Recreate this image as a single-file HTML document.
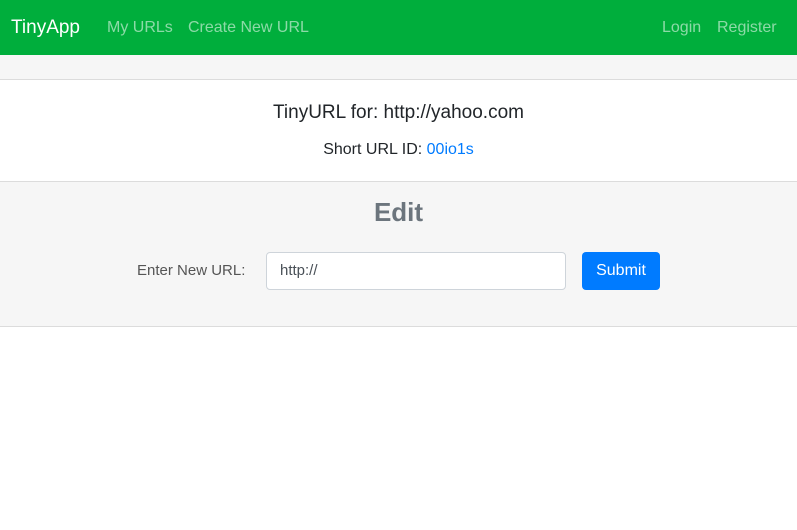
<!DOCTYPE html>
<html><head><meta charset="utf-8"><style>
*{box-sizing:border-box;margin:0;padding:0}
body{width:797px;height:530px;background:#fff;font-family:"Liberation Sans",sans-serif;position:relative;overflow:hidden}
.nav{position:absolute;left:0;top:0;width:797px;height:55px;background:#00ae3c}
.nav span{position:absolute;top:19px;font-size:16px;color:rgba(255,255,255,.55)}
.brand{font-size:19px!important;color:#fff!important;top:17px!important;left:11px}
.band1{position:absolute;top:55px;left:0;width:797px;height:25px;background:#f6f6f6;border-bottom:1px solid #dcdcdc}
.band2{position:absolute;top:181px;left:0;width:797px;height:146px;background:#f6f6f6;border-top:1px solid #dcdcdc;border-bottom:1px solid #dcdcdc}
.c{position:absolute;left:0;width:797px;text-align:center}
</style></head><body>
<div class="nav">
<span class="brand">TinyApp</span>
<span style="left:107px">My URLs</span>
<span style="left:188px">Create New URL</span>
<span style="left:662px">Login</span>
<span style="left:717px">Register</span>
</div>
<div class="band1"></div>
<div class="c" style="top:102px;font-size:19px;color:#212529">TinyURL for: http://yahoo.com</div>
<div class="c" style="top:141px;font-size:16px;color:#212529">Short URL ID: <span style="color:#007bff">00io1s</span></div>
<div class="band2">
<div class="c" style="top:15px;font-size:26px;color:#6c757d;font-weight:bold">Edit</div>
<div style="position:absolute;left:137px;top:80px;font-size:15px;color:#555">Enter New URL:</div>
<div style="position:absolute;left:266px;top:70px;width:300px;height:38px;background:#fff;border:1px solid #ced4da;border-radius:4px;padding:9px 13px;font-size:15px;color:#495057">http://</div>
<div style="position:absolute;left:582px;top:70px;width:78px;height:38px;background:#007bff;border-radius:4px;color:#fff;font-size:16px;text-align:center;line-height:38px">Submit</div>
</div>
</body></html>
